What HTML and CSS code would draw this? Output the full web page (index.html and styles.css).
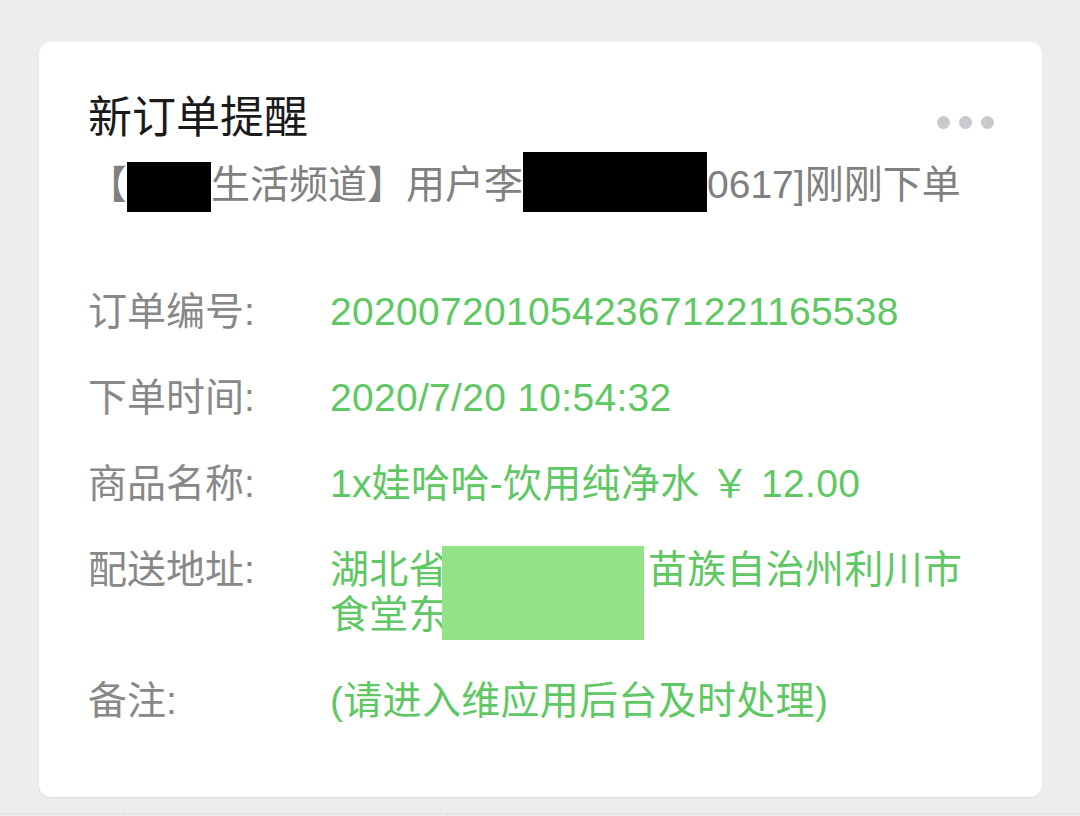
FILE: index.html
```html
<!DOCTYPE html>
<html lang="zh-CN">
<head>
  <meta charset="UTF-8">
  <meta name="viewport" content="width=device-width, initial-scale=1.0">
  <title>新订单提醒</title>
  <link rel="stylesheet" href="styles.css">
</head>
<body>

  <div class="page">
    <div class="card">
      <div class="card-head">
        <h2>新订单提醒</h2>
        <div class="dots"><span></span><span></span><span></span></div>
      </div>
      <p class="subtitle">【<span class="redact redact-short"></span>生活频道】用户李<span class="redact redact-long"></span>0617]刚刚下单</p>

      <div class="rows">
        <div class="row">
          <div class="label">订单编号:</div>
          <div class="value">20200720105423671221165538</div>
        </div>
        <div class="row">
          <div class="label">下单时间:</div>
          <div class="value">2020/7/20 10:54:32</div>
        </div>
        <div class="row">
          <div class="label">商品名称:</div>
          <div class="value">1x娃哈哈-饮用纯净水 ￥ 12.00</div>
        </div>
        <div class="row">
          <div class="label">配送地址:</div>
          <div class="value address">
            <div>湖北省<span class="gap"></span>苗族自治州利川市</div>
            <div>食堂东</div>
            <span class="mask"></span>
          </div>
        </div>
        <div class="row">
          <div class="label">备注:</div>
          <div class="value">(请进入维应用后台及时处理)</div>
        </div>
      </div>
    </div>
  </div>

  <div class="tabs">
    <span></span><span></span><span></span>
  </div>

</body>
</html>
```

FILE: styles.css
```css
body {
  margin: 0;
  background: #ededed;
  font-family: "Liberation Sans", "Noto Sans CJK SC", sans-serif;
  height: 816px;
  overflow: hidden;
}
.page {
  padding: 42px 39px 0 39px;
}
.card {
  box-sizing: border-box;
  width: 1003px;
  height: 755px;
  background: #fff;
  border-radius: 12px;
  box-shadow: 0 1px 2px rgba(0, 0, 0, 0.08);
  padding: 46px 48px 0 49px;
}
.card-head {
  display: flex;
  justify-content: space-between;
  align-items: flex-start;
}
h2 {
  margin: 0;
  font-size: 44px;
  line-height: 52px;
  font-weight: 400;
  color: #1a1a1a;
  font-family: "Noto Sans CJK SC", sans-serif;
}
.dots {
  display: flex;
  gap: 9px;
  margin-top: 28px;
}
.dots span {
  width: 13px;
  height: 13px;
  border-radius: 50%;
  background: #c9c8cd;
}
.subtitle {
  margin: 18px 0 0 0;
  font-size: 39px;
  line-height: 50px;
  color: #808080;
  white-space: nowrap;
}
.redact {
  display: inline-block;
  background: #000;
  vertical-align: middle;
  position: relative;
}
.redact-short {
  width: 84px;
  height: 50px;
  top: -1px;
}
.redact-long {
  width: 184px;
  height: 60px;
  top: -6px;
}
.rows {
  margin-top: 71px;
}
.row {
  display: grid;
  grid-template-columns: 242px 1fr;
  font-size: 39px;
  line-height: 45px;
  margin-bottom: 41px;
}
.label {
  color: #888;
}
.value {
  color: #5fc763;
  letter-spacing: 0.3px;
}
.address {
  position: relative;
}
.gap {
  display: inline-block;
  width: 200px;
}
.mask {
  position: absolute;
  left: 112px;
  top: -1px;
  width: 202px;
  height: 94px;
  background: #93e286;
}
.tabs {
  margin-top: 16px;
  border-top: 1px solid #e2e2e2;
  display: flex;
  justify-content: space-between;
  padding: 0 310px 0 124px;
}
.tabs span {
  width: 1px;
  height: 6px;
  background: #dcdcdc;
}
```
